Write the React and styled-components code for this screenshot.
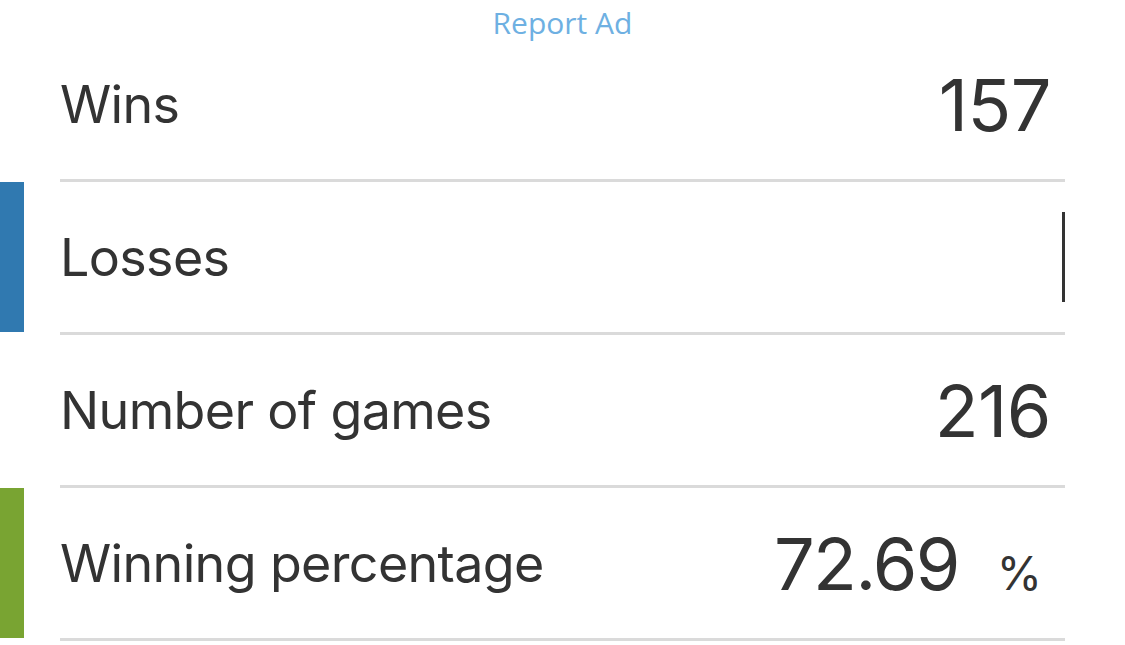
import styled, { createGlobalStyle } from "styled-components";

const GlobalStyle = createGlobalStyle`
  html, body {
    margin: 0;
    padding: 0;
    background: #fff;
  }
  body {
    font-family: Inter, "Liberation Sans", sans-serif;
    color: #333333;
  }
`;

const stats = [
  { id: "wins", label: "Wins", value: "157" },
  { id: "losses", label: "Losses", value: "", accent: "#3079b0", editing: true },
  { id: "games", label: "Number of games", value: "216" },
  { id: "pct", label: "Winning percentage", value: "72.69", unit: "%", accent: "#79a432" },
];

const Page = styled.div`
  width: 1125px;
  height: 645px;
  overflow: hidden;
`;

const AdBar = styled.div`
  height: 29px;
  box-sizing: border-box;
  padding-top: 9px;
  line-height: 28px;
  text-align: center;
  font-family: "Open Sans", sans-serif;
  font-size: 30px;
  color: #6eb0e2;
`;

const Row = styled.div`
  display: flex;
  align-items: flex-start;
`;

const Accent = styled.div`
  width: 24px;
  height: 150px;
  flex-shrink: 0;
  background: ${(p) => p.$color || "transparent"};
`;

const Body = styled.div`
  flex: 1;
  height: 150px;
  margin-left: 36px;
  margin-right: 60px;
  border-bottom: 3px solid #dadada;
  display: flex;
  align-items: center;
  justify-content: space-between;
`;

const Label = styled.div`
  font-size: 52px;
  letter-spacing: -0.65px;
  color: #333;
`;

const ValueWrap = styled.div`
  display: flex;
  align-items: baseline;
  padding-right: ${(p) => (p.$unit ? "23px" : "14px")};
`;

const Value = styled.div`
  font-size: 72px;
  letter-spacing: ${(p) => (p.$unit ? "-1.6px" : "-0.5px")};
  color: #333;
`;

const Unit = styled.span`
  font-size: 46px;
  margin-left: 38px;
  color: #333;
`;

const Caret = styled.span`
  display: block;
  width: 3px;
  height: 90px;
  background: #333;
`;

export default function App() {
  return (
    <Page>
      <GlobalStyle />
      <AdBar>Report Ad</AdBar>
      {stats.map((s) => (
        <Row key={s.id}>
          <Accent $color={s.accent} />
          <Body>
            <Label>{s.label}</Label>
            {s.editing ? (
              <Caret />
            ) : (
              <ValueWrap $unit={!!s.unit}>
                <Value $unit={!!s.unit}>{s.value}</Value>
                {s.unit && <Unit>{s.unit}</Unit>}
              </ValueWrap>
            )}
          </Body>
        </Row>
      ))}
    </Page>
  );
}
